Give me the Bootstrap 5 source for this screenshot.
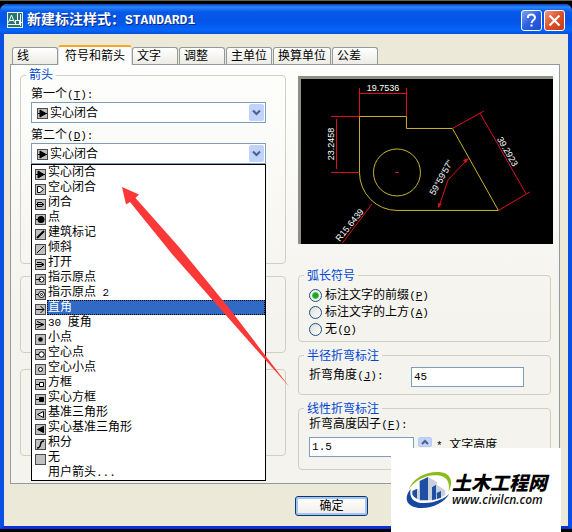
<!DOCTYPE html>
<html lang="zh-CN">
<head>
<meta charset="utf-8">
<meta name="viewport" content="width=device-width, initial-scale=1">
<title>新建标注样式: STANDARD1</title>
<link href="https://cdn.jsdelivr.net/npm/bootstrap@5.3.0/dist/css/bootstrap.min.css" rel="stylesheet">
<style>
  body { background: #000; color: #000; font-family: "Liberation Sans", "Noto Sans CJK SC", sans-serif; font-size: 12px; line-height: 16px; }
  button, input, select { font: inherit; color: inherit; }
  .desk { border-top: 1px solid #5f6653; padding: 3px 0 4px; }
  .win { background: #ece9d8; border: 4px solid #0a4fe4; border-top: 0; border-bottom: 3px solid #0831d9; border-radius: 7px 7px 0 0; }
  .titlebar { height: 30px; margin: 0 -4px; padding: 2px 7px 0; border-radius: 7px 7px 0 0; color: #fff; background: linear-gradient(#0a3fc0 0, #2b86fb 3px, #0658e8 8px, #0355e6 18px, #0566fb 26px, #0450d8 30px); }
  .titlebar h1 { font-size: 14px; line-height: 20px; font-weight: 700; text-shadow: 1px 1px #0a2a80; }
  .titlebar h1 span { font: 700 13px/20px "Liberation Mono", monospace; }
  .cap-btn { width: 21px; height: 21px; border: 1px solid #fff; border-radius: 3px; background: linear-gradient(135deg, #7da2f5, #2a5fe0 50%, #1c4fd0); }
  .cap-close { background: linear-gradient(135deg, #f09a7c, #dc4f28 50%, #c83a12); }
  .cap-btn svg { display: block; }
  .client { padding: 11px 8px 10px 6px; }
  .nav-tabs.sheet-tabs { border: 0; gap: 1px; margin-left: 2px; --bs-nav-tabs-border-width: 0; }
  .sheet-tabs .nav-link { margin: 0; min-width: 46px; height: 17px; padding: 0 4px; text-align: left; color: #000; border: 1px solid #919b9c; border-bottom: 0; border-radius: 3px 3px 0 0; background: linear-gradient(#fff, #ecebe5); }
  .sheet-tabs .nav-link.active { position: relative; z-index: 1; height: 20px; margin: 0 -1px -1px; padding: 0 6px; line-height: 15px; background: #fdfdfc; border-top: 2px solid #f5a623; color: #000; }
  .sheet { border: 1px solid #919b9c; background: linear-gradient(#fefefd, #f4f3ee 60%); padding: 3px 5px 13px 9px; display: grid; grid-template-columns: 26fr 25fr; gap: 12px; }
  .group { border: 1px solid #d0d0bf; border-radius: 4px; padding: 0 10px 3px; }
  .group legend { float: none; width: auto; margin: 0 0 0 -5px; padding: 0 3px; font-size: 12px; line-height: 14px; color: #0046d5; }
  .group-arrows { min-height: 196px; }
  .group-center { min-height: 77px; margin-top: 12px; }
  .group-break { min-height: 87px; }
  .key { font-family: "Liberation Mono", monospace; font-size: 11px; }
  .field-label { display: block; margin-top: 4px; height: 16px; }
  .xp-combo { position: relative; margin-right: 9px; }
  .xp-combo select { display: block; width: 100%; height: 21px; padding: 0 20px 0 18px; border: 1px solid #7f9db9; border-radius: 0; background: #fff; appearance: none; }
  .xp-combo .pick { position: absolute; left: 6px; top: 6px; pointer-events: none; }
  .xp-combo .chev { position: absolute; right: 2px; top: 2px; pointer-events: none; }
  .ico { width: 11px; height: 11px; flex: none; background: #c0c0c0; border: 1px solid #4a4a4a; }
  .arrow-list.dropdown-menu { top: 100%; left: 0; right: 0; min-width: 0; margin: 0; padding: 0; border: 1px solid #000; border-radius: 0; font-size: 12px; color: #000; }
  .arrow-list .dropdown-item { display: flex; align-items: flex-end; gap: 1px; height: 15px; padding: 0 0 0 3px; line-height: 14px; color: #000; background: none; }
  .arrow-list .dropdown-item span.nm { flex: 1; height: 15px; padding-left: 1px; }
  .arrow-list .dropdown-item.active span.nm { background: #316ac5; color: #fff; outline: 1px dotted #000; outline-offset: -1px; }
  .preview { margin-top: 8px; margin-bottom: 25px; border: solid #8f8f83; border-width: 3px 0 0 3px; margin-right: 1px; }
  .preview svg { display: block; width: 100%; height: auto; background: #000; }
  .preview text { font-family: "Liberation Sans Narrow", "Liberation Sans", sans-serif; font-size: 9px; fill: #fff; text-anchor: middle; }
  .side .group { margin-right: 3px; }
  .side .group + .group { margin-top: 7px; }
  .opt { height: 17px; gap: 3px; }
  .opt input { appearance: none; width: 13px; height: 13px; margin: 0; border: 1px solid #1c5180; border-radius: 50%; background: linear-gradient(135deg, #dcdcd7, #fff); }
  .opt input:checked { background: radial-gradient(circle, #21a121 0 2px, #55c255 3px, #f3f3f0 4px); }
  .xp-input { height: 20px; border: 1px solid #7f9db9; border-radius: 0; background: #fff; padding: 0 2px; font-family: "Liberation Mono", monospace; font-size: 11px; min-width: 0; }
  .in-angle { width: 113px; margin-right: 16px; }
  .in-factor { width: 105px; }
  .spin { width: 14px; height: 10px; border: 1px solid #b8cbf2; border-radius: 2px; background: #c1d2fb; padding: 0; }
  .spin svg { display: block; margin: auto; }
  .ok-row { padding: 12px 192px 0 0; }
  .xp-btn { width: 73px; height: 20px; line-height: 14px; padding: 0; border: 1px solid #003c74; border-radius: 3px; background: linear-gradient(#fff, #efeee8); box-shadow: inset 0 0 0 2px #a9c3f0; }
  .pointer { position: absolute; left: 122px; top: 186px; z-index: 1010; pointer-events: none; }
  .brand { position: absolute; right: 11px; bottom: 0; z-index: 1020; width: 170px; height: 85px; padding: 0 0 0 15px; background: #fff; }
  .brand strong { display: block; font: italic 900 19px/20px "Noto Sans CJK SC", sans-serif; white-space: nowrap; }
  .brand a { display: block; font: italic 600 12px/16px "Open Sans", sans-serif; color: #111; text-decoration: none; }
</style>
<script src="https://cdn.jsdelivr.net/npm/bootstrap@5.3.0/dist/js/bootstrap.bundle.min.js"></script>
</head>
<body>
<div class="desk position-relative">
  <div class="win">
    <header class="titlebar d-flex align-items-center">
      <svg width="16" height="16" viewBox="0 0 16 16" aria-hidden="true"><rect width="16" height="16" fill="#e8f4f0"/><rect x="1" y="1" width="14" height="14" fill="#27766f"/><path d="M1.500 10.500L4.500 3L7.500 10.500M3 8.500H6.500M1 12.500H8M10.500 1V8M8 10.500H15M13.500 2V14" stroke="#fff" fill="none"/><rect x="8.500" y="8.500" width="4" height="4" fill="#27766f" stroke="#fff"/></svg>
      <h1 class="mb-0 ms-1 flex-fill">新建标注样式：<span>STANDARD1</span></h1>
      <div class="d-flex" style="gap:2px">
        <button class="cap-btn p-0" type="button" aria-label="帮助"><svg width="19" height="19" viewBox="0 0 19 19"><path d="M6 7V5.500Q6.500 3.500 9.500 3.500T13 6.500Q13 8 11.500 9T9.500 12" fill="none" stroke="#fff" stroke-width="2"/><rect x="8.500" y="13.500" width="2" height="2" fill="#fff"/></svg></button>
        <button class="cap-btn cap-close p-0" type="button" aria-label="关闭"><svg width="19" height="19" viewBox="0 0 19 19"><path d="M4.500 4.500L14.500 14.500M14.500 4.500L4.500 14.500" stroke="#fff" stroke-width="2.200"/></svg></button>
      </div>
    </header>
    <main class="client">
      <nav class="nav nav-tabs sheet-tabs align-items-end flex-nowrap" aria-label="标注样式">
        <button class="nav-link" type="button">线</button>
        <button class="nav-link active" type="button" aria-current="page">符号和箭头</button>
        <button class="nav-link" type="button">文字</button>
        <button class="nav-link" type="button">调整</button>
        <button class="nav-link" type="button">主单位</button>
        <button class="nav-link" type="button">换算单位</button>
        <button class="nav-link" type="button">公差</button>
      </nav>
      <section class="sheet">
        <div class="d-flex flex-column">
          <fieldset class="group group-arrows">
            <legend>箭头</legend>
            <label class="field-label" for="first">第一个<span class="key">(<u>T</u>):</span></label>
            <div class="xp-combo">
              <select id="first"><option>实心闭合</option></select>
              <svg class="ico pick" viewBox="0 0 9 9"><path d="M0 4.500H9M2 1V8L8 4.500Z" stroke="#000"/></svg>
              <svg class="chev" width="15" height="17" viewBox="0 0 15 17"><rect width="15" height="17" rx="2" fill="#c1d2fb"/><path d="M4 6.500L7.500 10L11 6.500" fill="none" stroke="#4d6185" stroke-width="2"/></svg>
            </div>
            <label class="field-label" for="second">第二个<span class="key">(<u>D</u>):</span></label>
            <div class="xp-combo">
              <select id="second"><option>实心闭合</option></select>
              <svg class="ico pick" viewBox="0 0 9 9"><path d="M0 4.500H9M2 1V8L8 4.500Z" stroke="#000"/></svg>
              <svg class="chev" width="15" height="17" viewBox="0 0 15 17"><rect width="15" height="17" rx="2" fill="#c1d2fb"/><path d="M4 6.500L7.500 10L11 6.500" fill="none" stroke="#4d6185" stroke-width="2"/></svg>
              <div class="dropdown-menu show arrow-list" role="listbox" aria-label="箭头样式">
                <button class="dropdown-item" type="button" role="option"><svg class="ico" viewBox="0 0 9 9"><path d="M0 4.500H9M2 1V8L8 4.500Z" stroke="#000"/></svg><span class="nm">实心闭合</span></button>
                <button class="dropdown-item" type="button" role="option"><svg class="ico" viewBox="0 0 9 9"><path d="M1.500 1.500H4L7.500 4.500L4 7.500H1.500Z" fill="#fff" stroke="#000"/></svg><span class="nm">空心闭合</span></button>
                <button class="dropdown-item" type="button" role="option"><svg class="ico" viewBox="0 0 9 9"><path d="M1.500 2.500H6L7.500 4.500L6 6.500H1.500ZM0 4.500H8" fill="none" stroke="#000"/></svg><span class="nm">闭合</span></button>
                <button class="dropdown-item" type="button" role="option"><svg class="ico" viewBox="0 0 9 9"><circle cx="5" cy="4.500" r="3.500"/><path d="M0 4.500H3" stroke="#000"/></svg><span class="nm">点</span></button>
                <button class="dropdown-item" type="button" role="option"><svg class="ico" viewBox="0 0 9 9"><path d="M1 8L8 1" stroke="#000" stroke-width="2"/></svg><span class="nm">建筑标记</span></button>
                <button class="dropdown-item" type="button" role="option"><svg class="ico" viewBox="0 0 9 9"><path d="M1 8L8 1" stroke="#000"/></svg><span class="nm">倾斜</span></button>
                <button class="dropdown-item" type="button" role="option"><svg class="ico" viewBox="0 0 9 9"><path d="M1 2.500H5L8 4.500L5 6.500H1M0 4.500H8" fill="none" stroke="#000"/></svg><span class="nm">打开</span></button>
                <button class="dropdown-item" type="button" role="option"><svg class="ico" viewBox="0 0 9 9"><circle cx="5.500" cy="4.500" r="2.500" fill="#fff" stroke="#000"/><path d="M0 4.500H5" stroke="#000"/></svg><span class="nm">指示原点</span></button>
                <button class="dropdown-item" type="button" role="option"><svg class="ico" viewBox="0 0 9 9"><circle cx="5.500" cy="4.500" r="3" fill="#fff" stroke="#000"/><circle cx="5.500" cy="4.500" r="1" fill="none" stroke="#000"/><path d="M0 4.500H2" stroke="#000"/></svg><span class="nm">指示原点<span class="key"> 2</span></span></button>
                <button class="dropdown-item active" type="button" role="option" aria-selected="true"><svg class="ico" viewBox="0 0 9 9"><path d="M0 4.500H8M4.500 1L8 4.500L4.500 8" fill="none" stroke="#000"/></svg><span class="nm">直角</span></button>
                <button class="dropdown-item" type="button" role="option"><svg class="ico" viewBox="0 0 9 9"><path d="M0 4.500H8M1 1.500L8 4.500L1 7.500" fill="none" stroke="#000"/></svg><span class="nm"><span class="key">30 </span>度角</span></button>
                <button class="dropdown-item" type="button" role="option"><svg class="ico" viewBox="0 0 9 9"><circle cx="4.500" cy="4.500" r="2.300"/></svg><span class="nm">小点</span></button>
                <button class="dropdown-item" type="button" role="option"><svg class="ico" viewBox="0 0 9 9"><circle cx="5.500" cy="4.500" r="2.700" fill="#fff" stroke="#000"/><path d="M0 4.500H3" stroke="#000"/></svg><span class="nm">空心点</span></button>
                <button class="dropdown-item" type="button" role="option"><svg class="ico" viewBox="0 0 9 9"><circle cx="4.500" cy="4.500" r="2" fill="#fff" stroke="#000"/></svg><span class="nm">空心小点</span></button>
                <button class="dropdown-item" type="button" role="option"><svg class="ico" viewBox="0 0 9 9"><path d="M0 4.500H3M3.500 2.500H7.500V6.500H3.500Z" fill="#fff" stroke="#000"/></svg><span class="nm">方框</span></button>
                <button class="dropdown-item" type="button" role="option"><svg class="ico" viewBox="0 0 9 9"><path d="M0 4.500H3M3.500 2.500H7.500V6.500H3.500Z" stroke="#000"/></svg><span class="nm">实心方框</span></button>
                <button class="dropdown-item" type="button" role="option"><svg class="ico" viewBox="0 0 9 9"><path d="M7.500 1.500V7.500L1.500 4.500Z" fill="#fff" stroke="#000"/></svg><span class="nm">基准三角形</span></button>
                <button class="dropdown-item" type="button" role="option"><svg class="ico" viewBox="0 0 9 9"><path d="M7.500 1.500V7.500L1.500 4.500Z" stroke="#000"/></svg><span class="nm">实心基准三角形</span></button>
                <button class="dropdown-item" type="button" role="option"><svg class="ico" viewBox="0 0 9 9"><path d="M1 8Q4 8 4.500 4.500T8 1" fill="none" stroke="#000" stroke-width="1.500"/></svg><span class="nm">积分</span></button>
                <button class="dropdown-item" type="button" role="option"><svg class="ico" viewBox="0 0 9 9"></svg><span class="nm">无</span></button>
                <button class="dropdown-item" type="button" role="option"><svg class="ico invisible" viewBox="0 0 9 9"></svg><span class="nm">用户箭头<span class="key">...</span></span></button>
              </div>
            </div>
          </fieldset>
          <fieldset class="group group-center" aria-label="圆心标记"></fieldset>
          <fieldset class="group group-break mt-3" aria-label="折断标注"></fieldset>
        </div>
        <div class="side">
          <div class="preview">
            <svg viewBox="0 0 252 165" role="img" aria-label="预览">
              <g fill="none" stroke="#c8b432">
                <path d="M58.500 37.500H105.500V49.500H151.500L197.500 131.500H96A37.500 38 0 0 1 58.500 93.500Z"/>
                <circle cx="96" cy="93.500" r="23.500"/>
              </g>
              <g fill="none" stroke="#e01020">
                <path d="M58.500 9V37M105.500 9V37M58.500 14.500H105.500M30 37.500H58M30 93.500H58M35.500 40V90"/>
                <path d="M151.500 49.500L183 32M179 34L225 114.500M197.500 131.500L229 113M167 80L147 101L138 128M71 125L41.500 164M94 93.500H98"/>
              </g>
              <path fill="#e01020" d="M168 79L165 84L162 81ZM137 129L137 124L141 125Z"/>
              <text x="82" y="12">19.7536</text>
              <text transform="translate(33 65) rotate(-90)">23.2458</text>
              <text transform="translate(204 74) rotate(60)">39.2923</text>
              <text transform="translate(143 100) rotate(-61)">59°59'57"</text>
              <text transform="translate(51 148) rotate(-51)">R15.6439</text>
            </svg>
          </div>
          <fieldset class="group">
            <legend>弧长符号</legend>
            <div class="opt d-flex align-items-center mt-1"><input type="radio" name="arc" id="arc1" checked><label for="arc1">标注文字的前缀<span class="key">(<u>P</u>)</span></label></div>
            <div class="opt d-flex align-items-center"><input type="radio" name="arc" id="arc2"><label for="arc2">标注文字的上方<span class="key">(<u>A</u>)</span></label></div>
            <div class="opt d-flex align-items-center"><input type="radio" name="arc" id="arc3"><label for="arc3">无<span class="key">(<u>O</u>)</span></label></div>
          </fieldset>
          <fieldset class="group">
            <legend>半径折弯标注</legend>
            <div class="d-flex justify-content-between mt-1 mb-1"><label for="angle">折弯角度<span class="key">(<u>J</u>):</span></label><input class="xp-input in-angle" id="angle" value="45"></div>
          </fieldset>
          <fieldset class="group pb-2">
            <legend>线性折弯标注</legend>
            <label class="d-block mb-1" for="factor">折弯高度因子<span class="key">(<u>F</u>):</span></label>
            <div class="d-flex mb-1"><input class="xp-input in-factor" id="factor" value="1.5"><button class="spin ms-1" type="button" aria-label="增加"><svg width="8" height="6" viewBox="0 0 8 6"><path d="M1 5L4 2L7 5" fill="none" stroke="#4d6185" stroke-width="2"/></svg></button><span class="ms-1"><span class="key">* </span>文字高度</span></div>
          </fieldset>
        </div>
      </section>
      <div class="ok-row d-flex justify-content-end"><button class="xp-btn" type="button">确定</button></div>
    </main>
  </div>
  <svg class="pointer" width="168" height="200" viewBox="0 0 168 200" aria-hidden="true"><path fill="#fb3838" d="M0 0L17 7.500L13.500 11L57 60L107 121L167.500 200L102 126L50 67L8 15L4 17.500Z"/></svg>
  <aside class="brand d-flex align-items-center">
    <svg width="46" height="38" viewBox="378 120 138 114" class="flex-shrink-0" aria-hidden="true">
      <path fill="#8dbb1c" d="M386 176C398 140 440 120 478 123C512 126 522 150 505 183C512 154 500 134 470 133C436 131 402 150 386 176Z"/>
      <path fill="#17479e" d="M392 174C386 202 404 217 434 216C466 215 494 202 508 188C494 214 460 230 426 231C380 231 368 202 392 174Z"/>
      <path fill="#1f4fa3" d="M419 150L444 138V208H419ZM397 180L411 173V203Q400 199 397 190ZM456 168L468 160V205L456 208Z"/>
      <path fill="#c9d0da" d="M444 138L471 153V160L456 168V208H444ZM411 173L419 177V206L411 203ZM468 160L496 178V192L482 200V185L468 190Z"/>
      <path fill="#1f4fa3" d="M470 186L483 180V200L470 205Z"/>
    </svg>
    <div><strong>土木工程网</strong><a href="#">www.civilcn.com</a></div>
  </aside>
</div>
</body>
</html>
